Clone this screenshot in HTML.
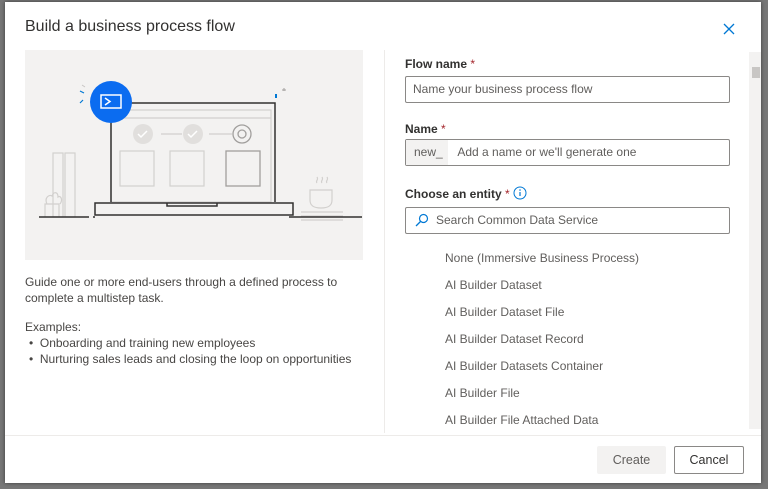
<!DOCTYPE html>
<html><head><meta charset="utf-8"><style>
*{margin:0;padding:0;box-sizing:border-box}
body{width:768px;height:489px;background:#777;font-family:"Liberation Sans",sans-serif;position:relative;overflow:hidden;color:#323130}
.dlg{position:absolute;left:5px;top:2px;width:756px;height:481px;background:#fff;box-shadow:0 0 4px rgba(0,0,0,.5)}
.abs{position:absolute}
h1{position:absolute;left:20px;top:16px;font-size:16px;font-weight:normal;color:#323130}
.ill{position:absolute;left:20px;top:48px;width:338px;height:210px;background:#f3f2f1}
.lt{font-size:12px;color:#484644;line-height:16px}
.lbl{font-size:12px;font-weight:bold;color:#323130}
.lbl span{color:#a4262c;font-weight:normal}
.inp{position:absolute;left:400px;width:325px;height:27px;border:1px solid #8a8886;border-radius:2px;font-size:12px;color:#605e5c;line-height:25px}
.item{position:absolute;left:440px;font-size:12px;color:#605e5c}
.btn{position:absolute;top:444px;height:28px;font-size:12.5px;text-align:center;line-height:28px;border-radius:2px}
</style></head><body>
<div class="dlg">
<h1>Build a business process flow</h1>
<svg class="abs" style="left:718px;top:21px" width="12" height="12"><path d="M1 1L11 11M11 1L1 11" stroke="#0078d4" stroke-width="1.3"/></svg>
<div class="ill">
<svg width="338" height="210" viewBox="0 0 338 210">
<g fill="none" stroke="#d2d0ce" stroke-width="1.2">
<g transform="translate(-6,0)">
<rect x="92" y="60" width="160" height="92"/><line x1="92" y1="68" x2="252" y2="68"/>
<rect x="101" y="101" width="34" height="35"/><rect x="151" y="101" width="34" height="35"/>
<line x1="142" y1="84" x2="163" y2="84"/><line x1="190" y1="84" x2="213" y2="84"/>
</g>
<rect x="28" y="103" width="10" height="64"/><rect x="40" y="103" width="10" height="64"/>
<path d="M20 167V154H34V167M22 154c-3-6 2-10 5-8c2-5 6-4 6 1c3-2 5 3 2 7"/>
<path d="M285 140h22v10c0 6-4 8-11 8s-11-2-11-8z"/><path d="M292 133c-2-2 2-3 0-6M297 133c-2-2 2-3 0-6M302 133c-2-2 2-3 0-6"/>
<path d="M276 162h42M276 166h42M276 170h42"/>
</g>
<g transform="translate(-6,0)">
<g fill="none" stroke="#a19f9d" stroke-width="1.3"><rect x="207" y="101" width="34" height="35"/><circle cx="223" cy="84" r="9"/><circle cx="223" cy="84" r="4"/></g>
<circle cx="124" cy="84" r="10" fill="#e1dfdd"/><circle cx="174" cy="84" r="10" fill="#e1dfdd"/>
<path d="M119 84l3 3 6-6M169 84l3 3 6-6" stroke="#fff" stroke-width="1.5" fill="none"/>
<g fill="none" stroke="#323130" stroke-width="1.5"><path d="M92 152V53H256V152"/><rect x="76" y="153" width="198" height="12"/><path d="M148 153v3h50v-3"/></g>
<path d="M265 38l0 3M263 40h4" stroke="#a19f9d"/><rect x="256" y="44" width="2" height="4" fill="#0078d4"/>
<path d="M65 43l-4-2M64 50l-3 3" stroke="#0078d4" stroke-width="1.2"/><path d="M66 37l-3-2" stroke="#c8c6c4"/>
<circle cx="92" cy="52" r="21" fill="#0b6cf0"/>
<rect x="82" y="45" width="20" height="13" fill="none" stroke="#fff" stroke-width="1.5"/><path d="M86 48l5 3.5-5 3.5" stroke="#fff" stroke-width="1.5" fill="none"/>
</g>
<path d="M14 167h50M68 167h2M264 167h73" stroke="#323130" stroke-width="1.5"/>
</svg></div>
<div class="abs lt" style="left:20px;top:272px;width:340px">Guide one or more end-users through a defined process to complete a multistep task.</div>
<div class="abs lt" style="left:20px;top:317px">Examples:</div>
<div class="abs lt" style="left:24px;top:333px">•&nbsp; Onboarding and training new employees<br>•&nbsp; Nurturing sales leads and closing the loop on opportunities</div>
<div class="abs" style="left:379px;top:48px;width:1px;height:383px;background:#edebe9"></div>
<div class="abs" style="left:744px;top:50px;width:12px;height:377px;background:#f3f2f1"></div>
<div class="abs" style="left:747px;top:65px;width:8px;height:11px;background:#c8c6c4"></div>
<div class="abs" style="left:0;top:433px;width:756px;height:1px;background:#edebe9"></div>
<div class="abs lbl" style="left:400px;top:55px">Flow name <span>*</span></div>
<div class="inp" style="top:74px;padding-left:7px">Name your business process flow</div>
<div class="abs lbl" style="left:400px;top:120px">Name <span>*</span></div>
<div class="inp" style="top:137px"><span style="display:inline-block;background:#f3f2f1;width:42px;height:25px;padding-left:8px">new_</span> <span style="padding-left:6px">Add a name or we'll generate one</span></div>
<div class="abs lbl" style="left:400px;top:185px">Choose an entity <span>*</span></div>
<svg class="abs" style="left:508px;top:184px" width="14" height="14"><circle cx="7" cy="7" r="6" fill="none" stroke="#0078d4"/><path d="M7 6v4" stroke="#0078d4" stroke-width="1.2"/><circle cx="7" cy="4" r=".8" fill="#0078d4"/></svg>
<div class="inp" style="top:205px;padding-left:30px">Search Common Data Service</div>
<svg class="abs" style="left:410px;top:211px" width="14" height="14"><circle cx="8.5" cy="5.5" r="4" fill="none" stroke="#0078d4" stroke-width="1.2"/><path d="M5.5 8.5L1 13" stroke="#0078d4" stroke-width="1.3"/></svg>
<div class="item" style="top:249px">None (Immersive Business Process)</div>
<div class="item" style="top:276px">AI Builder Dataset</div>
<div class="item" style="top:303px">AI Builder Dataset File</div>
<div class="item" style="top:330px">AI Builder Dataset Record</div>
<div class="item" style="top:357px">AI Builder Datasets Container</div>
<div class="item" style="top:384px">AI Builder File</div>
<div class="item" style="top:411px">AI Builder File Attached Data</div>
<div class="btn" style="left:592px;width:69px;background:#f3f2f1;color:#605e5c">Create</div>
<div class="btn" style="left:669px;width:70px;border:1px solid #8a8886;color:#323130;line-height:26px">Cancel</div>
</div>
</body></html>
